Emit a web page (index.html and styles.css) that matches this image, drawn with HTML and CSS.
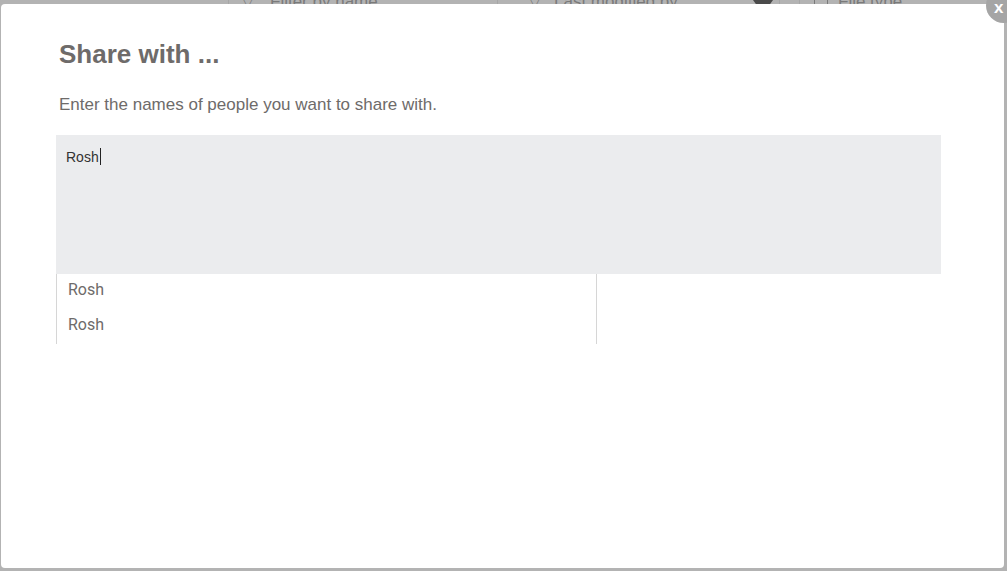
FILE: index.html
```html
<!DOCTYPE html>
<html lang="en">
<head>
    <meta charset="UTF-8">
    <title>Share with</title>
    <link rel="stylesheet" href="styles.css">
</head>
<body>
    <!-- Page behind the overlay -->
    <div class="page">
        <div class="filters">
            <div class="cell cell-first"></div>
            <div class="cell cell-name"><span class="funnel">&#9661;</span> Filter by name</div>
            <div class="cell cell-modified"><span class="funnel">&#9661;</span> Last modified by <span class="caret-down"></span></div>
            <div class="cell cell-gap"></div>
            <div class="cell cell-type"><span class="check"></span> File type</div>
        </div>
    </div>

    <!-- Share dialog -->
    <div class="modal">
        <button class="close">x</button>
        <h1 class="modal-title">Share with ...</h1>
        <p class="modal-text">Enter the names of people you want to share with.</p>

        <div class="share-input">Rosh<span class="cursor"></span></div>

        <ul class="suggestions">
            <li>Rosh</li>
            <li>Rosh</li>
        </ul>
    </div>
</body>
</html>
```

FILE: styles.css
```css
/* Page */
body {
    margin: 0;
    background-color: #b3b3b3;
    font-family: "Liberation Sans", Arial, sans-serif;
    overflow: hidden;
}

.page {
    height: 571px;
}

/* Filter bar behind the dialog */
.filters {
    display: flex;
    height: 30px;
    margin-top: -13px;
    color: #7a7a7a;
    font-size: 17px;
    white-space: nowrap;
}

.cell {
    display: flex;
    align-items: center;
    flex-shrink: 0;
    border-right: 1px solid #a6a6a6;
}

.cell-first {
    width: 228px;
}

.cell-name {
    width: 255px;
    padding-left: 13px;
    gap: 16px;
}

.cell-modified {
    width: 250px;
    padding-left: 31px;
    gap: 13px;
}

.cell-gap {
    width: 19px;
}

.cell-type {
    width: 180px;
    padding-left: 14px;
    gap: 10px;
    border-right: none;
}

.funnel {
    font-size: 15px;
}

.caret-down {
    margin-left: 62px;
    width: 0;
    height: 0;
    border-left: 10px solid transparent;
    border-right: 10px solid transparent;
    border-top: 14px solid #4a4a4a;
    margin-top: 10px;
}

.check {
    width: 12px;
    height: 12px;
    border: 1px solid #7a7a7a;
}

/* Dialog */
.modal {
    position: fixed;
    left: 1px;
    top: 4px;
    width: 1003px;
    height: 564px;
    box-sizing: border-box;
    padding: 0 63px 0 55px;
    background-color: #ffffff;
    border-radius: 4px;
}

.close {
    position: absolute;
    right: -17px;
    top: -16px;
    width: 35px;
    height: 35px;
    padding: 5px 0 0 0;
    border: none;
    border-radius: 50%;
    background-color: #a5a5a5;
    color: #ffffff;
    font-family: "Liberation Sans", Arial, sans-serif;
    font-size: 17px;
    font-weight: bold;
    text-align: left;
    text-indent: 8px;
}

.modal-title {
    margin: 0;
    padding: 34px 0 0 3px;
    font-size: 26px;
    line-height: 32px;
    font-weight: bold;
    color: #6e6b6a;
}

.modal-text {
    margin: 25px 0 20px 3px;
    font-size: 17px;
    line-height: 20px;
    color: #6e6b6a;
}

/* Input */
.share-input {
    height: 139px;
    box-sizing: border-box;
    padding: 13px 10px;
    background-color: #ebecee;
    font-family: Arial, "Liberation Sans", sans-serif;
    font-size: 14px;
    line-height: 18px;
    color: #333333;
}

.cursor {
    display: inline-block;
    width: 1px;
    height: 17px;
    margin-left: 1px;
    vertical-align: -3px;
    background-color: #222222;
}

/* Suggestions */
.suggestions {
    list-style-type: none;
    width: 541px;
    margin: 0;
    padding: 5px 0 0 0;
    box-sizing: border-box;
    border-left: 1px solid #d6d6d6;
    border-right: 1px solid #d6d6d6;
    height: 70px;
}

.suggestions li {
    padding: 0 11px;
    height: 35px;
    line-height: 22px;
    font-family: Roboto, "Liberation Sans", sans-serif;
    font-size: 16px;
    color: #6e6b6a;
}
```
